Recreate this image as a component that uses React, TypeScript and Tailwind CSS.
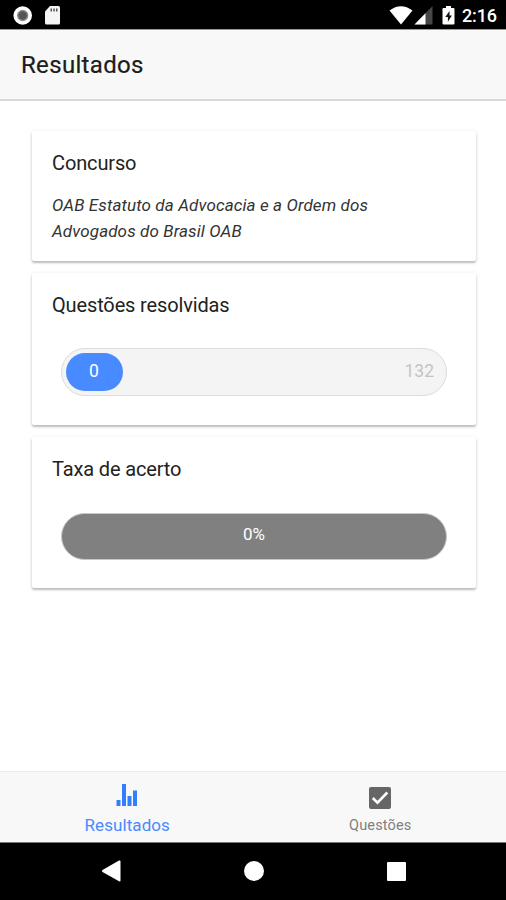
import type { ReactNode } from "react";

const StatusBar = () => {
  return (
    <div className="flex h-[29px] shrink-0 items-center bg-black pl-[13px] pr-[9px] text-white">
      <svg width="20" height="20" viewBox="0 0 20 20" className="mt-[2px]">
        <circle cx="9.7" cy="9.5" r="7.5" fill="#8c8c8c" stroke="#fff" strokeWidth="3.600" />
        <circle cx="9.7" cy="9.5" r="4.2" fill="#555" />
      </svg>
      <svg width="17" height="20" viewBox="0 0 17 20" className="ml-[11px] mt-[2px]">
        <path d="M6 0h8.5Q16 0 16 1.500v15.500Q16 18.500 14.500 18.500h-12Q1 18.500 1 17V5.500z" fill="#f5f5f5" />
        <path d="M6.500 2.500h1.500v3H6.500zM9.300 2.500h1.500v3H9.300zM12 2.500h1.500v3H12z" fill="#555" />
      </svg>
      <div className="ml-auto flex items-center">
        <svg width="24" height="20" viewBox="0 0 24 20" className="mt-[2px]">
          <path d="M0.500 4.500Q12-4 23.500 4.500L12 18.500z" fill="#fff" />
        </svg>
        <svg width="19" height="20" viewBox="0 0 19 20" className="ml-px mt-[2px]">
          <path d="M0.500 18.500L18.500 0v18.500z" fill="#474747" />
          <path d="M0.500 18.500L11.500 7.200v11.300z" fill="#fff" />
        </svg>
        <svg width="13" height="20" viewBox="0 0 13 20" className="ml-[9px] mt-[2px]">
          <path d="M4 0h5v2h2.500Q12.500 2 12.500 3v14.500Q12.500 18.500 11.500 18.500h-10Q0.500 18.500 0.500 17.500V3Q0.500 2 1.500 2H4z" fill="#fff" />
          <path d="M7.500 5L3.300 11h2.600v4.800L9.900 9.500H7.500z" fill="#111" />
        </svg>
        <span className="ml-[7px] mt-[3px] text-[18px] leading-none font-medium tracking-[-0.1px]">2:16</span>
      </div>
    </div>
  );
};

const Card = ({ title, className, children }: { title: string; className: string; children: ReactNode }) => {
  return (
    <section
      className={`rounded-[2px] bg-white px-5 pt-[19px] shadow-[0_2px_2px_0_rgba(0,0,0,0.2),0_1px_4px_0_rgba(0,0,0,0.12)] ${className}`}
    >
      <h2 className="text-[20px] leading-[26px] tracking-[-0.14px] text-[#222]">{title}</h2>
      {children}
    </section>
  );
};

const TabBar = () => {
  return (
    <nav className="grid h-[71px] shrink-0 grid-cols-2 border-t border-[#ececec] bg-[#f8f8f8] pl-px">
      <a className="flex flex-col items-center text-[#488aff]">
        <svg width="22" height="24" viewBox="0 0 22 24" className="mt-[12px]" fill="#327eff">
          <path d="M0.500 16h4v6h-4zM6 0h4v22H6zM11.500 12h4v10h-4zM17 6.500h4V22h-4z" />
        </svg>
        <span className="mt-[5px] text-[17px] leading-6 tracking-[0.08px]">Resultados</span>
      </a>
      <a className="flex flex-col items-center pl-px text-[#7f7f7f]">
        <svg width="24" height="24" viewBox="0 0 24 24" className="mt-[14px]">
          <rect x="1" y="1" width="22" height="22" rx="2" fill="#666" />
          <path d="M4.800 12l4.700 4.700L19.300 6.500" fill="none" stroke="#fff" strokeWidth="2.600" />
        </svg>
        <span className="mt-[6px] text-[14.500px] leading-5 tracking-[0.15px]">Questões</span>
      </a>
    </nav>
  );
};

const SystemNav = () => {
  return (
    <div className="flex h-[58px] shrink-0 items-center justify-between border-t border-[#777] bg-black pr-[100px] pb-px pl-[101px]">
      <svg width="20" height="22" viewBox="0 0 20 22" fill="#fff">
        <path d="M18 0.500Q19.500 0 19.500 1.500v19Q19.500 22 18 21.300L1.500 12Q0.300 11 1.500 10z" />
      </svg>
      <div className="size-5 rounded-full bg-white" />
      <div className="size-[19px] rounded-[1px] bg-white" />
    </div>
  );
};

export default function App() {
  return (
    <div className="flex h-screen flex-col bg-white font-['Roboto',sans-serif]">
      <StatusBar />
      <header className="flex h-[72px] shrink-0 items-center border-t border-b-2 border-t-[#999] border-b-[#d8d8d8] bg-[#f8f8f8] pl-[21px]">
        <h1 className="text-[24px] tracking-[0.33px] text-[#1c1c1c] [-webkit-text-stroke:0.2px]">Resultados</h1>
      </header>

      <main className="flex flex-1 flex-col gap-3 pt-[30px] pr-[30px] pl-8">
        <Card title="Concurso" className="h-[130px]">
          <p className="mt-[16px] text-[17px] leading-[26px] tracking-[0.11px] text-[#333] italic">
            OAB Estatuto da Advocacia e a Ordem dos
            <br />
            Advogados do Brasil OAB
          </p>
        </Card>

        <Card title="Questões resolvidas" className="h-[152px]">
          <div className="mx-[9px] mt-[30px] flex h-[48px] items-center justify-between rounded-full border border-[#dcdcdc] bg-[#f4f4f4] pr-3 pl-[4px]">
            <div className="flex h-[38px] w-[57px] items-center justify-center rounded-full bg-[#488aff] pr-px pb-px text-[17.500px] text-white">
              0
            </div>
            <span className="pb-px text-[17.500px] text-[#c4c4c4]">132</span>
          </div>
        </Card>

        <Card title="Taxa de acerto" className="h-[151px]">
          <div className="mx-[9px] mt-[31px] flex h-[47px] items-center justify-center rounded-full border border-[#c8c8c8] bg-[#808080] pb-[3px] text-[17px] text-white">
            0%
          </div>
        </Card>
      </main>

      <TabBar />
      <SystemNav />
    </div>
  );
}
